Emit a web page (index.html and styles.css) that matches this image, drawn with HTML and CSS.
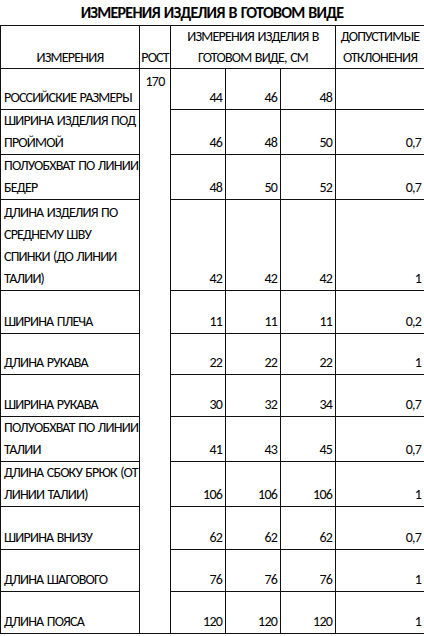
FILE: index.html
```html
<!DOCTYPE html>
<html lang="ru">
<head>
<meta charset="utf-8">
<title>Измерения изделия в готовом виде</title>
<link rel="stylesheet" href="styles.css">
</head>
<body>
<div class="sheet">
  <h1 class="title">ИЗМЕРЕНИЯ ИЗДЕЛИЯ В ГОТОВОМ ВИДЕ</h1>
  <table class="grid">
    <colgroup>
      <col class="c-name">
      <col class="c-height">
      <col class="c-size">
      <col class="c-size">
      <col class="c-size">
      <col class="c-tol">
    </colgroup>
    <thead>
      <tr class="h-head">
        <th class="hd-bottom">ИЗМЕРЕНИЯ</th>
        <th class="hd-bottom hd-tight">РОСТ</th>
        <th class="hd-center" colspan="3">ИЗМЕРЕНИЯ ИЗДЕЛИЯ В<br>ГОТОВОМ ВИДЕ, СМ</th>
        <th class="hd-center">ДОПУСТИМЫЕ<br>ОТКЛОНЕНИЯ</th>
      </tr>
    </thead>
    <tbody>
      <tr class="h42">
        <td class="name">РОССИЙСКИЕ РАЗМЕРЫ</td>
        <td class="rost" rowspan="12">170</td>
        <td class="num">44</td><td class="num">46</td><td class="num">48</td><td class="num"></td>
      </tr>
      <tr class="h43">
        <td class="name">ШИРИНА ИЗДЕЛИЯ ПОД<br>ПРОЙМОЙ</td>
        <td class="num">46</td><td class="num">48</td><td class="num">50</td><td class="num">0,7</td>
      </tr>
      <tr class="h44">
        <td class="name">ПОЛУОБХВАТ ПО ЛИНИИ<br>БЕДЕР</td>
        <td class="num">48</td><td class="num">50</td><td class="num">52</td><td class="num">0,7</td>
      </tr>
      <tr class="h92">
        <td class="name">ДЛИНА ИЗДЕЛИЯ ПО<br>СРЕДНЕМУ ШВУ<br>СПИНКИ (ДО ЛИНИИ<br>ТАЛИИ)</td>
        <td class="num">42</td><td class="num">42</td><td class="num">42</td><td class="num">1</td>
      </tr>
      <tr class="h44">
        <td class="name">ШИРИНА ПЛЕЧА</td>
        <td class="num">11</td><td class="num">11</td><td class="num">11</td><td class="num">0,2</td>
      </tr>
      <tr class="h42">
        <td class="name">ДЛИНА РУКАВА</td>
        <td class="num">22</td><td class="num">22</td><td class="num">22</td><td class="num">1</td>
      </tr>
      <tr class="h43">
        <td class="name">ШИРИНА РУКАВА</td>
        <td class="num">30</td><td class="num">32</td><td class="num">34</td><td class="num">0,7</td>
      </tr>
      <tr class="h44">
        <td class="name">ПОЛУОБХВАТ ПО ЛИНИИ<br>ТАЛИИ</td>
        <td class="num">41</td><td class="num">43</td><td class="num">45</td><td class="num">0,7</td>
      </tr>
      <tr class="h41">
        <td class="name">ДЛИНА СБОКУ БРЮК (ОТ<br>ЛИНИИ ТАЛИИ)</td>
        <td class="num">106</td><td class="num">106</td><td class="num">106</td><td class="num">1</td>
      </tr>
      <tr class="h44">
        <td class="name">ШИРИНА ВНИЗУ</td>
        <td class="num">62</td><td class="num">62</td><td class="num">62</td><td class="num">0,7</td>
      </tr>
      <tr class="h43">
        <td class="name">ДЛИНА ШАГОВОГО</td>
        <td class="num">76</td><td class="num">76</td><td class="num">76</td><td class="num">1</td>
      </tr>
      <tr class="h43">
        <td class="name">ДЛИНА ПОЯСА</td>
        <td class="num">120</td><td class="num">120</td><td class="num">120</td><td class="num">1</td>
      </tr>
    </tbody>
  </table>
</div>
</body>
</html>
```
FILE: styles.css
```css
html, body {
  margin: 0;
  padding: 0;
  background: #ffffff;
}

body {
  font-family: "Carlito", "Lato", "Liberation Sans", sans-serif;
  color: #000000;
}

.sheet {
  width: 424px;
}

.title {
  margin: 0;
  height: 25px;
  line-height: 25px;
  font-size: 16px;
  letter-spacing: -0.75px;
  word-spacing: 1px;
  font-weight: bold;
  text-align: center;
  white-space: nowrap;
}

.grid {
  border-collapse: collapse;
  table-layout: fixed;
  width: 424px;
  font-size: 14px;
  letter-spacing: -0.8px;
  word-spacing: 1px;
  line-height: 22px;
}

.c-name { width: 139px; }
.c-height { width: 31px; }
.c-size { width: 55px; }
.c-tol { width: 89px; }

.grid th,
.grid td {
  border: 1px solid #111111;
  padding: 0 3px;
  white-space: nowrap;
  overflow: hidden;
  font-weight: normal;
}

.grid th {
  line-height: 21px;
}

.hd-bottom {
  vertical-align: bottom;
  text-align: center;
}

.grid .hd-tight {
  padding: 0;
}

.hd-center {
  vertical-align: middle;
  text-align: center;
}

.name {
  text-align: left;
  vertical-align: bottom;
}

.grid .rost {
  text-align: center;
  vertical-align: top;
  padding: 2px 0 0 0;
}

.num {
  text-align: right;
  vertical-align: bottom;
}

.h-head { height: 42px; }
.h41 { height: 40px; }
.h42 { height: 41px; }
.h43 { height: 42px; }
.h44 { height: 43px; }
.h92 { height: 91px; }
```
